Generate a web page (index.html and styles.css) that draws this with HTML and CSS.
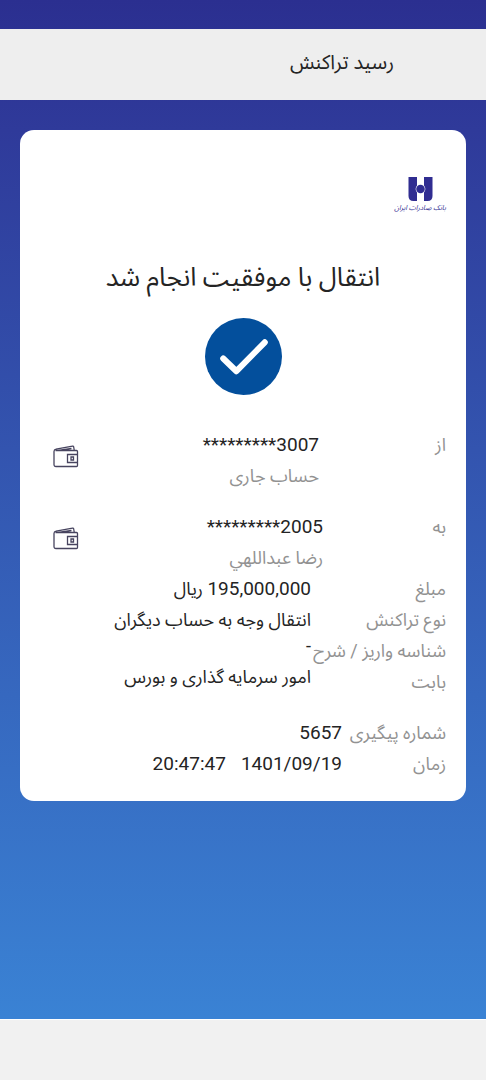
FILE: index.html
```html
<!DOCTYPE html>
<html lang="fa" dir="rtl">
<head>
<meta charset="utf-8">
<meta name="viewport" content="width=device-width, initial-scale=1">
<title>رسید تراکنش</title>
<link rel="stylesheet" href="styles.css">
</head>
<body>
<header class="app-header"><h1 class="app-title">رسید تراکنش</h1></header>
<main class="content">
  <article class="receipt">
    <div class="bank">
      <svg class="bank-mark" viewBox="0 0 24 24" aria-hidden="true">
        <path d="M0 0H8.500V8.500A5.700 5.700 0 0 0 8.500 15.500V24H5Q0 24 0 19ZM24 0H15.500V8.500A5.700 5.700 0 0 1 15.500 15.500V24H19Q24 24 24 19Z"/>
        <circle cx="12" cy="12" r="4.300"/>
      </svg>
      <span class="bank-name">بانک صادرات ایران</span>
    </div>
    <h2 class="status-title">انتقال با موفقیت انجام شد</h2>
    <svg class="status-icon" viewBox="0 0 76 76" aria-hidden="true">
      <circle cx="38" cy="38" r="38"/>
      <path d="M18 40 31 52.500 59 24"/>
    </svg>
    <dl class="account account-from">
      <dt class="label">از</dt>
      <dd class="value number" dir="ltr">*********3007</dd>
      <dd class="holder">حساب جاری</dd>
      <dd class="wallet"><svg class="wallet-icon" viewBox="0 0 26 24" aria-hidden="true"><path d="M2.500 5.500H23.500Q24.500 5.500 24.500 6.500V20.500Q24.500 21.500 23.500 21.500H3Q1 21.500 1 19.500V6.500Q1 4.500 3 4.200L19.500 1.200Q20.500 1 20.700 2L21.300 5.500M5 5.500 18.500 3.500M24.500 9.500H14.500V17.500H24.500M18 12H20.500V15H18Z"/></svg></dd>
    </dl>
    <dl class="account account-to">
      <dt class="label">به</dt>
      <dd class="value number" dir="ltr">*********2005</dd>
      <dd class="holder">رضا عبداللهي</dd>
      <dd class="wallet"><svg class="wallet-icon" viewBox="0 0 26 24" aria-hidden="true"><path d="M2.500 5.500H23.500Q24.500 5.500 24.500 6.500V20.500Q24.500 21.500 23.500 21.500H3Q1 21.500 1 19.500V6.500Q1 4.500 3 4.200L19.500 1.200Q20.500 1 20.700 2L21.300 5.500M5 5.500 18.500 3.500M24.500 9.500H14.500V17.500H24.500M18 12H20.500V15H18Z"/></svg></dd>
    </dl>
    <dl class="details">
      <dt class="label">مبلغ</dt><dd class="value"><span class="number">195,000,000</span> ریال</dd>
      <dt class="label">نوع تراکنش</dt><dd class="value">انتقال وجه به حساب دیگران</dd>
      <dt class="label">شناسه واریز / شرح</dt><dd class="value value-raised">-</dd>
      <dt class="label">بابت</dt><dd class="value value-raised">امور سرمایه گذاری و بورس</dd>
    </dl>
    <dl class="details tracking">
      <dt class="label">شماره پیگیری</dt><dd class="value number">5657</dd>
      <dt class="label">زمان</dt><dd class="value number date-time"><span dir="ltr">1401/09/19</span><span dir="ltr">20:47:47</span></dd>
    </dl>
  </article>
</main>
<footer class="bottom-bar"></footer>
</body>
</html>
```
FILE: styles.css
```css
* { box-sizing: border-box; }
body {
  margin: 0;
  min-height: 100vh;
  padding-top: 29px;
  display: flex;
  flex-direction: column;
  background: linear-gradient(#2b2f90, #2f3a9a 12%, #3a82d4 94%);
  color: #242424;
  font-family: Roboto, "Noto Sans Arabic", "Vazirmatn", "DejaVu Sans", sans-serif;
  font-size: 18px;
  line-height: 31px;
}
h1, h2, dl, dd { margin: 0; font-weight: 400; }
.app-header {
  height: 71px;
  padding: 0 92px 4px;
  display: flex;
  align-items: center;
  background: #eee;
}
.app-title { font-size: 20px; }
.content { flex: 1; padding: 30px 20px; }
.receipt {
  padding: 47px 20px 22px;
  background: #fff;
  border-radius: 14px;
}
.bank {
  width: 52px;
  display: flex;
  flex-direction: column;
  align-items: center;
  color: #302d91;
}
.bank-mark { width: 25px; height: 24px; fill: currentColor; }
.bank-name { font-size: 7px; line-height: 14px; font-style: italic; white-space: nowrap; }
.status-title { margin-top: 40px; font-size: 26px; line-height: 44px; text-align: center; }
.status-icon { display: block; width: 77px; height: 77px; margin: 19px auto 34px; }
.status-icon circle { fill: #034f9c; }
.status-icon path { fill: none; stroke: #fff; stroke-width: 6; stroke-linecap: round; stroke-linejoin: round; }
.account {
  display: grid;
  grid-template-columns: 127px 1fr 26px;
  padding-left: 13px;
  margin-bottom: 20px;
}
.account-to { grid-template-columns: 123px 1fr 26px; margin-bottom: 0; }
.account .value { text-align: right; }
.holder { grid-column: 2; grid-row: 2; color: #929292; }
.wallet { grid-column: 3; grid-row: 1 / 3; padding-top: 16px; line-height: 0; }
.wallet-icon { width: 26px; height: 24px; fill: none; stroke: #47445f; stroke-width: 1.300; }
.label { color: #929292; white-space: nowrap; }
.details { display: grid; grid-template-columns: 135px 1fr; }
.value { white-space: nowrap; }
.number { font-size: 19px; }
.value-raised { margin-top: -5px; }
.tracking { grid-template-columns: 104px 1fr; margin-top: 20px; }
.date-time { display: flex; gap: 15px; }
.bottom-bar { height: 61px; background: #f1f1f1; border-top: 1px solid #fff; }
```
